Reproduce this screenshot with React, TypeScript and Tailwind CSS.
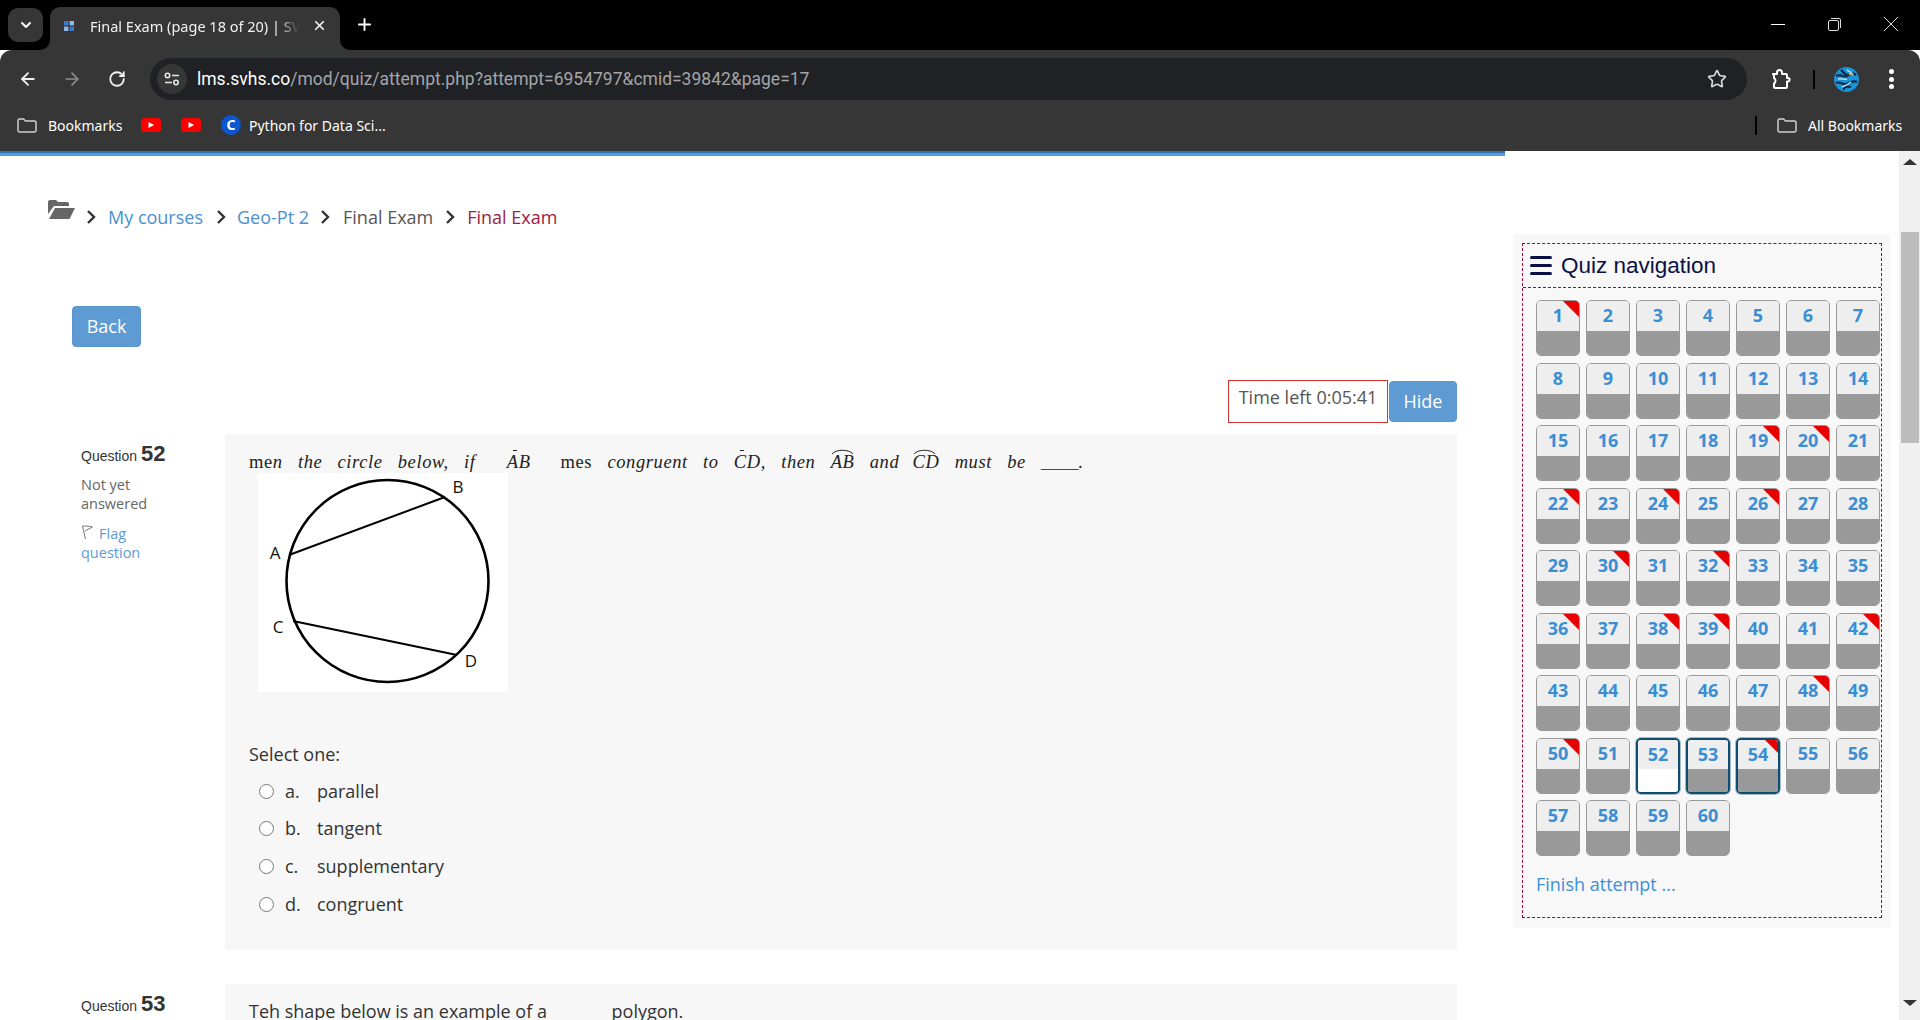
import { ArrowLeft, ArrowRight, RotateCw, Star, X, Plus, ChevronDown } from 'lucide-react';

const FLAGGED = [1, 19, 20, 22, 24, 26, 30, 32, 36, 38, 39, 42, 48, 50, 54];
const CURRENT_PAGE = [52, 53, 54];
const OPTIONS = [
  { letter: 'a.', label: 'parallel' },
  { letter: 'b.', label: 'tangent' },
  { letter: 'c.', label: 'supplementary' },
  { letter: 'd.', label: 'congruent' },
];

function YoutubeIcon() {
  return (
    <svg width="20" height="14" viewBox="0 0 20 14">
      <rect width="20" height="14" rx="3.5" fill="#f00" />
      <path d="M7.5 4l5.5 3-5.5 3z" fill="#fff" />
    </svg>
  );
}

function BookmarkFolder() {
  return (
    <svg width="20" height="15" viewBox="0 0 20 15" fill="none" stroke="#cfcfcf" strokeWidth="1.5">
      <path d="M1 2.5a1.5 1.5 0 0 1 1.5-1.5h4l2 2h9a1.5 1.5 0 0 1 1.5 1.5v8a1.5 1.5 0 0 1-1.5 1.5h-15a1.5 1.5 0 0 1-1.5-1.5z" />
    </svg>
  );
}

function Tab() {
  return (
    <div className="relative ml-[7px] flex h-[43px] w-[290px] items-center rounded-t-[10px] bg-[#363636] pb-[6px] pl-[14px]">
      <svg className="absolute bottom-0 left-[-10px]" width="10" height="10" viewBox="0 0 10 10">
        <path d="M10 0v10H0a10 10 0 0 0 10-10z" fill="#363636" />
      </svg>
      <svg className="absolute bottom-0 right-[-10px]" width="10" height="10" viewBox="0 0 10 10">
        <path d="M0 0v10h10a10 10 0 0 1-10-10z" fill="#363636" />
      </svg>
      <svg width="10" height="10" viewBox="0 0 10 10" className="shrink-0">
        <rect width="4.4" height="4.4" fill="#3f78c9" />
        <rect x="5.6" width="4.4" height="4.4" fill="#8fb8ea" />
        <rect y="5.6" width="4.4" height="4.4" fill="#8fb8ea" />
        <rect x="5.6" y="5.6" width="4.4" height="4.4" fill="#3f78c9" />
      </svg>
      <span className="ml-[16px] w-[209px] overflow-hidden whitespace-nowrap text-[14.5px] leading-[22px] text-[#f1f1f1] [mask-image:linear-gradient(to_right,black_90%,transparent)]">
        Final Exam (page 18 of 20) | SVH
      </span>
      <X size={15} strokeWidth={2.8} className="ml-[13px] shrink-0 text-[#eee]" />
    </div>
  );
}

function BrowserChrome() {
  return (
    <div className="shrink-0 font-['Noto_Sans',sans-serif]">
      {/* tab strip */}
      <div className="flex h-[50px] items-end bg-black">
        <div className="mb-[8px] ml-[8px] flex h-[34px] w-[35px] items-center justify-center rounded-[10px] bg-[#363636]">
          <ChevronDown size={16} strokeWidth={3} className="text-white" />
        </div>
        <Tab />
        <Plus size={19} strokeWidth={2.4} className="mb-[16px] ml-[15px] text-white" />
        <div className="mb-[19px] ml-auto flex items-center gap-[43px] pr-[22px]">
          <div className="h-[1px] w-[14px] bg-white" />
          <svg width="13" height="13" viewBox="0 0 13 13" fill="none" stroke="#ddd">
            <rect x="0.5" y="2.5" width="10" height="10" rx="1.5" />
            <path d="M3 .5h8a1.5 1.5 0 0 1 1.5 1.5v8" />
          </svg>
          <svg width="14" height="14" viewBox="0 0 14 14" stroke="#ddd">
            <path d="M0 0l14 14M14 0L0 14" />
          </svg>
        </div>
      </div>
      {/* toolbar */}
      <div className="h-[101px] rounded-t-[12px] bg-[#363636]">
        <div className="flex h-[50px] items-center pt-[8px]">
          <ArrowLeft size={20} strokeWidth={2.2} className="ml-[18px] text-[#f0f0f0]" />
          <ArrowRight size={20} strokeWidth={2} className="ml-[24px] text-[#8d8d8d]" />
          <RotateCw size={18} strokeWidth={2.4} className="ml-[26px] text-[#f0f0f0]" />
          <div className="ml-[24px] flex h-[42px] w-[1597px] items-center rounded-full bg-[#202124] pl-[7px] pr-[20px]">
            <div className="flex h-[30px] w-[30px] items-center justify-center rounded-full bg-[#363636]">
              <svg width="16" height="14" viewBox="0 0 16 14" fill="none" stroke="#e8e8e8" strokeWidth="1.6">
                <circle cx="3.5" cy="3.5" r="2.2" />
                <path d="M8 3.5h7M1 10.5h7" />
                <circle cx="12" cy="10.5" r="2.2" />
              </svg>
            </div>
            <span className="ml-[10px] whitespace-nowrap font-['Roboto',sans-serif] text-[17.5px] text-[#a3a5a8]">
              <span className="text-white">lms.svhs.co</span>/mod/quiz/attempt.php?attempt=6954797&amp;cmid=39842&amp;page=17
            </span>
            <Star size={20} strokeWidth={2} className="ml-auto text-[#d8d8d8]" />
          </div>
          <svg width="21" height="20" viewBox="0 0 21 20" fill="none" stroke="#fff" strokeWidth="2" className="ml-[24px]">
            <path d="M2 5h4V3.5a2.5 2.5 0 0 1 5 0V5h4a1 1 0 0 1 1 1v3h1.5a2 2 0 0 1 0 3.6H16V18a1 1 0 0 1-1 1H4a1 1 0 0 1-1-1v-3.5c2-1 2-4.5 0-5.5V6z" strokeLinejoin="round" />
          </svg>
          <div className="ml-[21px] h-[19px] w-[2px] bg-black" />
          <svg width="25" height="25" viewBox="0 0 25 25" className="ml-[19px]">
            <circle cx="12.5" cy="12.5" r="12.5" fill="#1b93d6" />
            <path d="M2 9c5-3 7 2 11 0s5-4 9-1M2 16c4-2 6 2 10 1s7-4 11-2M7 3c3 2 3 5 7 5M10 23c-1-3 3-4 7-3" fill="none" stroke="#0c2d4a" strokeWidth="2.2" />
            <path d="M4 12c4-1 6 1 9 0M13 3c2 1 4 2 6 5M8 20c3-1 6-2 9-5" fill="none" stroke="#a8e6ff" strokeWidth="1.4" />
            <circle cx="16" cy="7" r="1.3" fill="#e89a2c" />
          </svg>
          <div className="ml-[30px] flex flex-col gap-[2.5px]">
            <div className="h-[5px] w-[5px] rounded-full bg-white" />
            <div className="h-[5px] w-[5px] rounded-full bg-white" />
            <div className="h-[5px] w-[5px] rounded-full bg-white" />
          </div>
        </div>
        {/* bookmarks bar */}
        <div className="flex h-[50px] items-center text-[14px] text-white">
          <div className="ml-[17px]"><BookmarkFolder /></div>
          <span className="ml-[11px] w-[72px] whitespace-nowrap">Bookmarks</span>
          <div className="ml-[21px]"><YoutubeIcon /></div>
          <div className="ml-[20px]"><YoutubeIcon /></div>
          <div className="ml-[20px] flex h-[20px] w-[20px] items-center justify-center rounded-full border-2 border-[#0b57d0] bg-[#0b57d0] text-[14px] font-bold leading-none text-white">C</div>
          <span className="ml-[8px]">Python for Data Sci...</span>
          <div className="ml-auto h-[19px] w-[2px] bg-black" />
          <div className="ml-[20px]"><BookmarkFolder /></div>
          <span className="ml-[11px] mr-[18px] w-[94px] whitespace-nowrap">All Bookmarks</span>
        </div>
      </div>
    </div>
  );
}

function CrumbSep({ className }: { className: string }) {
  return (
    <svg width="10" height="14" viewBox="0 0 10 14" fill="none" stroke="#333" strokeWidth="2.4" className={className}>
      <path d="M2 1l6 6-6 6" />
    </svg>
  );
}

function Crumbs() {
  return (
    <div className="flex h-[40px] items-center text-[18px] leading-none">
      <svg width="27" height="20" viewBox="0 0 27 20" fill="#666" className="-mt-[16px] ml-[48px]">
        <path d="M0 3a2 2 0 0 1 2-2h6l2 2h9a2 2 0 0 1 2 2v2H6L0 15z" />
        <path d="M7 9h20l-5 10a1 1 0 0 1-1 1H1z" />
      </svg>
      <CrumbSep className="ml-[11px]" />
      <a className="ml-[12px] text-[#4a90d0]">My courses</a>
      <CrumbSep className="ml-[13px]" />
      <a className="ml-[11px] text-[#4a90d0]">Geo-Pt 2</a>
      <CrumbSep className="ml-[11px]" />
      <span className="ml-[13px] text-[#555]">Final Exam</span>
      <CrumbSep className="ml-[12px]" />
      <span className="ml-[12px] text-[#9b1c46]">Final Exam</span>
    </div>
  );
}

function Arc({ children, hat }: { children: string; hat?: boolean }) {
  return (
    <span className="relative inline-block">
      {children}
      {hat ? (
        <span className="absolute left-[6px] top-[-1px] h-[1px] w-[4px] bg-[#222]" />
      ) : (
        <svg className="absolute left-0 top-[-3px]" width="23" height="7" viewBox="0 0 23 7" fill="none" stroke="#222">
          <path d="M1 6C5 1 18 1 22 6" />
        </svg>
      )}
    </span>
  );
}

function CircleFigure() {
  return (
    <svg width="250" height="219" viewBox="0 0 250 219" className="ml-[9px] block bg-white">
      <circle cx="129.5" cy="108" r="101" fill="none" stroke="#000" strokeWidth="2.6" />
      <path d="M31 82L187 24M35 148L199 182" stroke="#000" strokeWidth="2" />
      <g fontFamily="'Open Sans', sans-serif" fontSize="17" fill="#111" textAnchor="middle">
        <text x="17" y="86">A</text>
        <text x="200" y="20">B</text>
        <text x="20" y="160">C</text>
        <text x="213" y="194">D</text>
      </g>
    </svg>
  );
}

function QuestionInfo({ n, children }: { n: number; children?: React.ReactNode }) {
  return (
    <div className="w-[153px] shrink-0 pl-[9px] pt-[3px]">
      <div className="font-['Liberation_Sans',sans-serif] text-[14px] text-[#333]">
        Question <span className="text-[22px] font-bold">{n}</span>
      </div>
      {children}
    </div>
  );
}

function Question52() {
  return (
    <div className="flex">
      <QuestionInfo n={52}>
        <div className="mt-[5px] text-[14.5px] leading-[19px] text-[#666]">Not yet<br />answered</div>
        <div className="mt-[11px] text-[14.5px] leading-[19px] text-[#5b9bd5]">
          <svg width="13" height="15" viewBox="0 0 13 15" fill="none" stroke="#777" className="mr-[5px] inline-block align-[-1px]">
            <path d="M1.5 1l3 13M1.5 1c4 0 7 0 10 1L4 6" />
          </svg>
          Flag<br />question
        </div>
      </QuestionInfo>
      <div className="h-[516px] w-[1232px] bg-[#f7f7f7] pl-[24px] pt-[17px]">
        <p className="h-[22px] whitespace-nowrap font-['Liberation_Serif',serif] text-[18.5px] italic leading-[23px] tracking-[0.6px] text-[#222] [word-spacing:10px]">
          <span className="not-italic">me</span>n the circle below, if <span className="ml-[16px] mr-[30px]"><Arc hat>AB</Arc></span>
          <span className="not-italic">mes</span> congruent to <Arc hat>CD</Arc>, then <Arc>AB</Arc> and <span className="-ml-[2px]"><Arc>CD</Arc></span> must be <span className="text-[15px] tracking-normal">_____</span>.
        </p>
        <CircleFigure />
        <div className="mt-[50px] text-[18px] leading-[24px] text-[#333]">Select one:</div>
        <div className="mt-[13px] flex flex-col gap-[13.8px]">
          {OPTIONS.map((o) => (
            <label key={o.letter} className="flex h-[24px] items-center text-[18px] text-[#333]">
              <input type="radio" name="q52" className="ml-[10px] h-[15px] w-[15px]" />
              <span className="ml-[11px] w-[32px]">{o.letter}</span>
              <span>{o.label}</span>
            </label>
          ))}
        </div>
      </div>
    </div>
  );
}

function QuizNav() {
  return (
    <aside className="mt-[78px] h-[694px] w-[378px] bg-[#f8f8f8] p-[9px]">
      <div className="h-[675px] border border-dashed border-[#9b0a3c]">
        <div className="flex h-[44px] items-center border-b border-dashed border-[#9b0a3c] pl-[7px] font-['Liberation_Sans',sans-serif] text-[22.5px] text-[#0a1045]">
          <div className="mr-[9px] flex h-[19px] w-[22px] flex-col justify-between">
            <div className="h-[3px] rounded bg-[#0a1045]" />
            <div className="h-[3px] rounded bg-[#0a1045]" />
            <div className="h-[3px] rounded bg-[#0a1045]" />
          </div>
          Quiz navigation
        </div>
        <div className="ml-[13px] mt-[12px] grid w-[344px] grid-cols-[repeat(7,44px)] gap-x-[6px] gap-y-[6.5px]">
          {Array.from({ length: 60 }, (_, i) => i + 1).map((n) => {
            const isCurrent = CURRENT_PAGE.includes(n);
            const flagged = FLAGGED.includes(n);
            return (
              <div key={n} className={`relative h-[56px] overflow-hidden rounded-[5px] ${isCurrent ? 'border-2 border-[#0f4c6e] shadow-[0_0_0_1px_rgba(15,76,110,0.35)]' : 'border border-[#999]'}`}>
                <div className={`${isCurrent ? 'h-[29px]' : 'h-[30px]'} bg-[#eeeeee] text-center text-[18px] font-bold leading-[28px] text-[#3a8ed4]`}>{n}</div>
                <div className={`h-full ${n === 52 ? 'bg-white' : 'bg-[#999999]'}`} />
                {flagged && <div className={`absolute right-0 top-0 h-0 w-0 border-l-transparent border-t-[#e60000] ${isCurrent ? 'border-l-[13px] border-t-[13px]' : 'border-l-[16px] border-t-[16px]'}`} />}
              </div>
            );
          })}
        </div>
        <a className="ml-[13px] mt-[15px] block text-[18px] leading-[26px] text-[#3b8fd8]">Finish attempt ...</a>
      </div>
    </aside>
  );
}

export default function App() {
  return (
    <div className="flex h-[1020px] w-[1920px] flex-col overflow-hidden bg-white font-['Open_Sans',sans-serif]">
      <BrowserChrome />
      <div className="flex min-h-0 flex-1">
        <div className="min-w-0 flex-1 overflow-hidden">
          <div className="h-[5px] w-[1505px] border-t-2 border-[#2f6fb8] bg-[#5b9bd5]" />
          <div className="flex">
            <main className="w-[1513px] shrink-0">
              <div className="pt-[41px]"><Crumbs /></div>
              <button className="ml-[72px] mt-[69px] block h-[41px] w-[69px] rounded-[4px] border border-[#5a95cc] bg-[#5f9bd3] text-[18px] text-white">Back</button>
              <div className="mr-[56px] mt-[33px] flex items-end justify-end">
                <div className="flex h-[43px] w-[160px] items-center justify-center border border-[#d0342c] pb-[8px] text-[18px] text-[#555]">Time left 0:05:41</div>
                <button className="mb-[1px] ml-[1px] h-[41px] w-[68px] rounded-[4px] border border-[#5a95cc] bg-[#5f9bd3] text-[18px] text-white">Hide</button>
              </div>
              <div className="ml-[72px] mt-[11px]">
                <Question52 />
                <div className="mt-[34px] flex">
                  <QuestionInfo n={53} />
                  <div className="h-[100px] w-[1232px] bg-[#f7f7f7] pl-[24px] pt-[14px] text-[18px] text-[#333]">
                    Teh shape below is an example of a <span className="ml-[60px]">polygon.</span>
                  </div>
                </div>
              </div>
            </main>
            <QuizNav />
          </div>
        </div>
        {/* page scrollbar */}
        <div className="flex w-[21px] shrink-0 flex-col items-center bg-[#f0f0f0]">
          <div className="mt-[8px] h-0 w-0 border-x-[7px] border-b-[6px] border-x-transparent border-b-[#333]" />
          <div className="mt-[67px] h-[211px] w-[18px] bg-[#bcbcbc]" />
          <div className="mb-[14px] mt-auto h-0 w-0 border-x-[7px] border-t-[6px] border-x-transparent border-t-[#333]" />
        </div>
      </div>
    </div>
  );
}
